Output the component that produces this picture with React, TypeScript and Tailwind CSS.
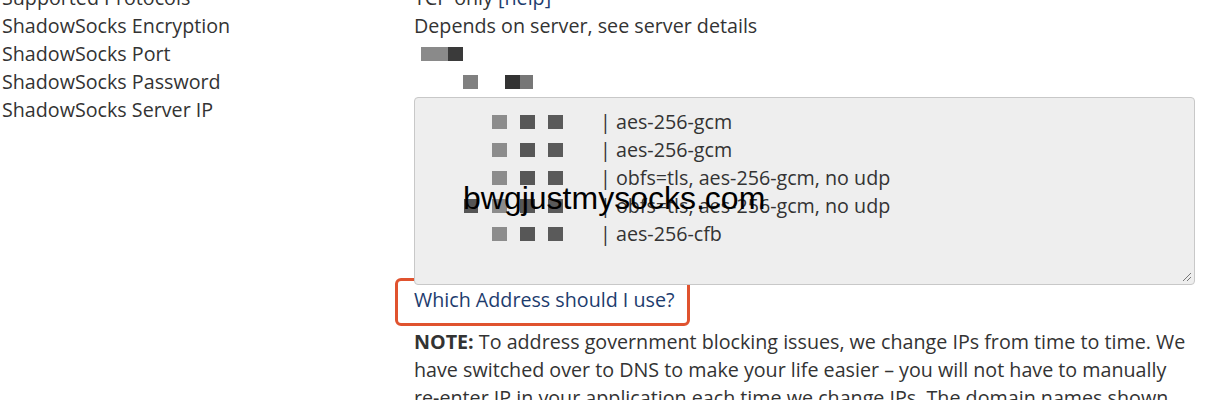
import React from 'react';

const labels = [
  'Supported Protocols',
  'ShadowSocks Encryption',
  'ShadowSocks Port',
  'ShadowSocks Password',
  'ShadowSocks Server IP',
];

const servers = [
  { text: 'aes-256-gcm', extra: false },
  { text: 'aes-256-gcm', extra: false },
  { text: 'obfs=tls, aes-256-gcm, no udp', extra: false },
  { text: 'obfs=tls, aes-256-gcm, no udp', extra: true },
  { text: 'aes-256-cfb', extra: false },
];

function Blur({ className }: { className: string }) {
  return <span className={`inline-block h-[14px] ${className}`} />;
}

function ServerRow({ text, extra }: { text: string; extra: boolean }) {
  return (
    <div className="flex h-[28px] items-center">
      <div className="flex w-[185px] shrink-0 items-center">
        <span className="w-[49px]" />
        {extra ? <Blur className="w-[14px] bg-[#555]" /> : <span className="w-[14px]" />}
        <span className="w-[14px]" />
        <Blur className="w-[15px] bg-[#8c8c8c]" />
        <span className="w-[13px]" />
        <Blur className="w-[15px] bg-[#575757]" />
        <span className="w-[13px]" />
        <Blur className="w-[15px] bg-[#5a5a5a]" />
      </div>
      <span className="text-[#333]">| {text}</span>
    </div>
  );
}

export default function App() {
  return (
    <div
      className="h-[400px] overflow-hidden bg-white text-[19.7px] leading-[28px] text-[#333]"
      style={{ fontFamily: '"Open Sans", "Noto Sans", sans-serif' }}
    >
      <div className="-mt-[16px] flex">
        <div className="w-[414px] shrink-0 pl-[2px]">
          {labels.map((l) => (
            <div key={l} className="h-[28px]">
              {l}
            </div>
          ))}
        </div>
        <div className="w-[781px] shrink-0">
          <div className="h-[28px]">
            TCP only <a className="text-[#1d3c6e]">[help]</a>
          </div>
          <div className="h-[28px]">Depends on server, see server details</div>
          <div className="flex h-[28px] items-center pl-[7px]">
            <Blur className="w-[27px] bg-[#8a8a8a]" />
            <Blur className="w-[15px] bg-[#3a3a3a]" />
          </div>
          <div className="flex h-[28px] items-center pl-[49px]">
            <Blur className="w-[15px] bg-[#808080]" />
            <span className="w-[27px]" />
            <Blur className="w-[15px] bg-[#333]" />
            <Blur className="w-[13px] bg-[#777]" />
          </div>
          <div className="relative mt-[1px] h-[188px] rounded-[4px] border border-[#c8c8c8] bg-[#eeeeee] pt-[10px]">
            {servers.map((s, i) => (
              <ServerRow key={i} text={s.text} extra={s.extra} />
            ))}
            <div
              className="absolute left-[48px] top-[83px] text-[32px] leading-[34px] text-black"
              style={{ fontFamily: '"Liberation Sans", Arial, sans-serif' }}
            >
              bwgjustmysocks.com
            </div>
            <svg className="absolute bottom-[2px] right-[2px]" width="12" height="12" viewBox="0 0 12 12">
              <path d="M11 3 L3 11 M11 7 L7 11" stroke="#777" strokeWidth="1" />
            </svg>
          </div>
          <div className="mt-[-7px] -ml-[19px] w-[295px] rounded-[6px] border-[3px] border-[#e0532f] pt-[5px] pb-[9px] pl-[16px]">
            <a className="text-[#1d3c6e]">Which Address should I use?</a>
          </div>
          <p className="mt-[2px] pr-[4px]">
            <b className="font-bold">NOTE:</b> To address government blocking issues, we change IPs from time to time. We
            have switched over to DNS to make your life easier – you will not have to manually re&#8209;enter IP in your
            application each time we change IPs. The domain names shown below will always point to the current IP
            addresses of your servers.
          </p>
        </div>
      </div>
    </div>
  );
}
